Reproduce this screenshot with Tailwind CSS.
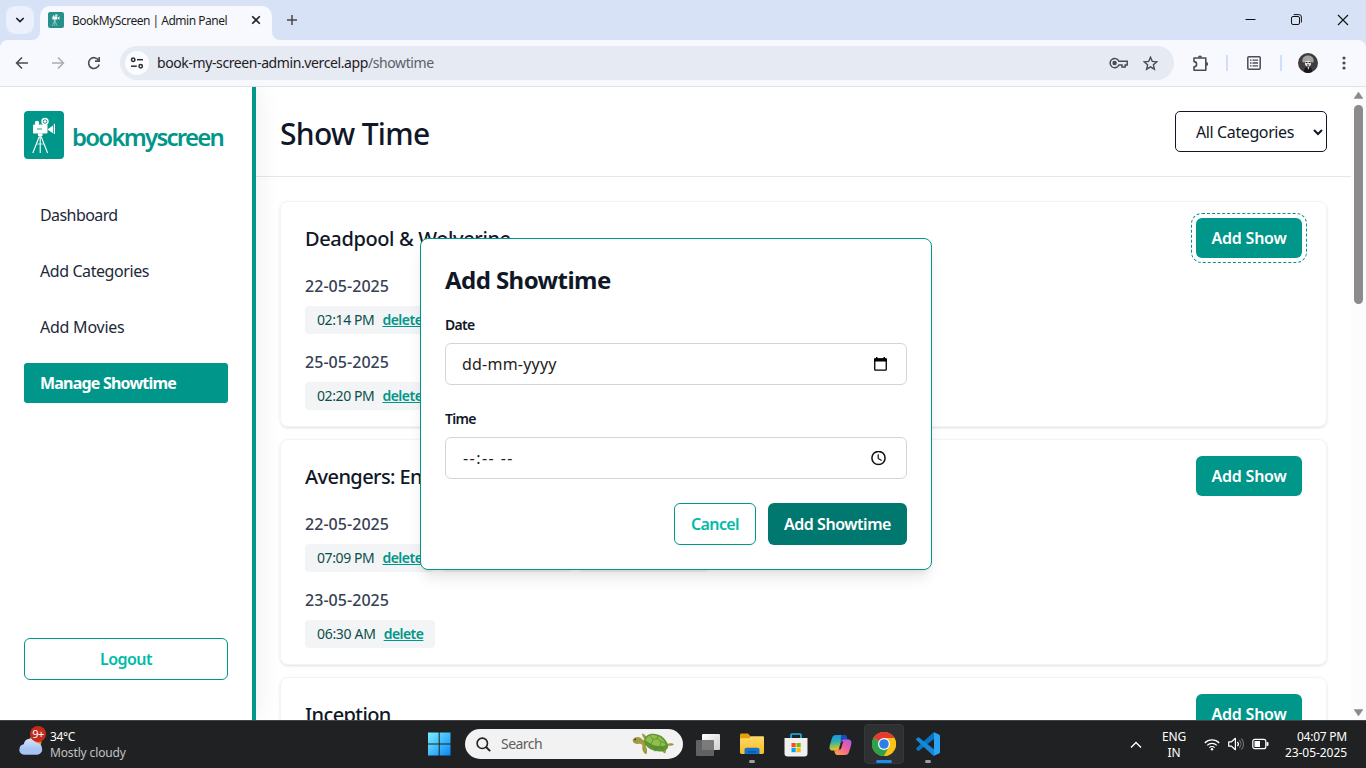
<!DOCTYPE html>
<html lang="en">
<head>
<meta charset="utf-8">
<title>BookMyScreen | Admin Panel</title>
<script src="https://cdn.jsdelivr.net/npm/@tailwindcss/browser@4"></script>
</head>
<body class="w-[1366px] h-[768px] overflow-hidden flex flex-col bg-white text-gray-900 font-['Noto_Sans','Open_Sans',sans-serif]">

<svg class="hidden">
  <symbol id="camera" viewBox="0 0 40 48">
    <g fill="#fff">
      <circle cx="13" cy="12" r="2.2"/>
      <circle cx="21" cy="10.5" r="3.7"/>
      <rect x="9" y="13.6" width="14.5" height="8.8" rx="1"/>
      <path d="M24 18l5-3.400v7.600l-5-3.200z"/>
      <rect x="29.8" y="12.8" width="1.2" height="10.2"/>
      <rect x="14" y="22.4" width="4.5" height="2.6"/>
    </g>
    <circle cx="21" cy="10.5" r="1.8" fill="none" stroke="#009689" stroke-width=".9"/>
    <path d="M13 18h5" stroke="#009689" stroke-width=".9"/>
    <path d="M15.300 25.500L8.800 42M16.200 25v17M17.100 25.500L23.600 42" fill="none" stroke="#fff" stroke-width="1.1"/>
    <path d="M12.600 33h7.200" fill="none" stroke="#fff" stroke-width=".7"/>
  </symbol>
</svg>

<!-- Tab strip -->
<div class="h-10 shrink-0 bg-[#d8e2f6] flex items-end">
  <div class="ml-[6px] mb-[6px] w-7 h-7 rounded-[9px] bg-[#ebf0fc] flex items-center justify-center">
    <svg width="10" height="8" viewBox="0 0 10 8" fill="none" stroke="#1f1f1f" stroke-width="1.7"><path d="M1.3 2L5 5.6 8.7 2"/></svg>
  </div>
  <svg class="-ml-[2px]" width="8" height="8"><path d="M8 0v8H0a8 8 0 0 0 8-8z" fill="#f8f9fe"/></svg>
  <div class="w-[232px] h-[34px] rounded-t-[10px] bg-[#f8f9fe] flex items-center pl-2 pb-[6px]">
    <div class="w-4 h-4 rounded-[2px] bg-[#279088] flex items-center justify-center"><svg width="16" height="16"><use href="#camera"/></svg></div>
    <span class="ml-2 w-[162px] pt-[2px] text-xs leading-4 tracking-[-0.49px] whitespace-nowrap text-[#1f1f1f]">BookMyScreen | Admin Panel</span>
    <svg class="ml-[17px]" width="10" height="10" viewBox="0 0 10 10" stroke="#1f1f1f" stroke-width="1.6"><path d="M1.200 1.200l7.600 7.600M8.800 1.200L1.200 8.800"/></svg>
  </div>
  <svg width="8" height="8"><path d="M0 0v8h8a8 8 0 0 1-8-8z" fill="#f8f9fe"/></svg>
  <svg class="ml-[7px] mb-[15px]" width="10" height="10" viewBox="0 0 10 10" stroke="#474747" stroke-width="1.5"><path d="M5 0v10M0 5h10"/></svg>
  <div class="flex-1"></div>
  <div class="flex items-center h-10 pr-[17px] gap-[35px]">
    <svg width="11" height="12" viewBox="0 0 11 12" stroke="#111" stroke-width="1"><path d="M.5 5.5h10"/></svg>
    <svg width="11" height="12" viewBox="0 0 11 12" fill="none" stroke="#111"><rect x=".5" y="2.500" width="8" height="8" rx="1.500"/><path d="M2.700.6h5.200a2.500 2.500 0 0 1 2.500 2.500v5.400"/></svg>
    <svg width="12" height="12" viewBox="0 0 12 12" stroke="#111" stroke-width="1.1"><path d="M1 1l10 10M11 1L1 11"/></svg>
  </div>
</div>

<!-- Toolbar -->
<div class="h-[47px] shrink-0 bg-[#d8e2f6]">
  <div class="h-full rounded-t-lg bg-[#f8f9fe] border-b border-[#dde2ea] flex items-center">
    <svg class="ml-[15px]" width="14" height="14" viewBox="0 0 14 14" fill="none" stroke="#474c57" stroke-width="1.6"><path d="M13 7H2M7 1.500L1.600 7 7 12.500"/></svg>
    <svg class="ml-[22px]" width="14" height="14" viewBox="0 0 14 14" fill="none" stroke="#a9acb3" stroke-width="1.6"><path d="M1 7h11M7 1.500L12.400 7 7 12.500"/></svg>
    <svg class="ml-[22px]" width="14" height="14" viewBox="0 0 14 14" fill="none" stroke="#474c57" stroke-width="1.6"><path d="M12.200 8.600A5.400 5.400 0 1 1 11.600 4.200"/><path d="M12.200.9v4.200H8"/></svg>
    <div class="ml-[19px] w-[1054px] h-[34px] rounded-full bg-[#e6eaf3] flex items-center pl-[5px] pr-4">
      <div class="w-6 h-6 rounded-full bg-[#fbfcff] flex items-center justify-center">
        <svg width="14" height="14" viewBox="0 0 14 14" fill="none" stroke="#2a2d34" stroke-width="1.500"><circle cx="3.200" cy="3.700" r="1.700"/><path d="M7 3.700h6"/><circle cx="10.700" cy="10.200" r="1.700"/><path d="M1 10.200h5.800"/></svg>
      </div>
      <span class="ml-2 text-sm tracking-[-0.4px] text-[#1f2024]">book-my-screen-admin.vercel.app<span class="text-[#5b606b]">/showtime</span></span>
      <div class="flex-1"></div>
      <svg width="19" height="12" viewBox="0 0 19 12" fill="none" stroke="#474c57" stroke-width="1.500"><path d="M9.900 4.200A4.600 4.600 0 1 0 9.900 8H13v2h3.200V8h2V4.200z"/><circle cx="5.600" cy="6.100" r="1.500" fill="#474c57"/></svg>
      <svg class="ml-[15px]" width="15" height="15" viewBox="0 0 15 15" fill="none" stroke="#474c57" stroke-width="1.400"><path d="M7.500 1.300l1.800 4.100 4.500.4-3.400 3 1 4.400-3.900-2.300-3.900 2.300 1-4.400-3.400-3 4.500-.4z"/></svg>
    </div>
    <svg class="ml-[18px]" width="18" height="18" viewBox="0 0 18 18"><path d="M2 4h11.800v12.200H2v-3.400a2.600 2.600 0 0 0 0-5.200z" fill="none" stroke="#474c57" stroke-width="1.600" stroke-linejoin="round"/><path d="M6 3.600a2 2 0 0 1 4 0zM14.200 8a2 2 0 0 1 0 4z" fill="#474c57"/></svg>
    <div class="ml-4 w-[2px] h-4 bg-[#cfdffb]"></div>
    <svg class="ml-[19px]" width="14" height="14" viewBox="0 0 14 14" fill="none" stroke="#474c57"><rect x=".8" y=".8" width="12.400" height="12.400" rx="1" stroke-width="1.500"/><path d="M3 4.200h1.500M3 7h1.500M3 9.800h1.500M5.500 4.200H11M5.500 7H11M5.500 9.800H11" stroke-width="1.300"/></svg>
    <div class="ml-[19px] w-[2px] h-4 bg-[#cfdffb]"></div>
    <svg class="ml-4" width="20" height="20" viewBox="0 0 20 20"><circle cx="10" cy="10" r="10" fill="#3f3d3d"/><path d="M4.500 9c-1-4 2-6.600 5.500-6.600S16.500 5 15.500 9c-1 1-2 .5-2.500-1l-5-.5C7 9.500 5.500 10 4.500 9z" fill="#a5a2a0"/><path d="M6.800 8.500c1-1.500 5-1.500 6.400 0l-.2 3c-.6 1.500-1.600 2.300-3 2.300s-2.400-.8-3-2.300z" fill="#e2e0de"/><path d="M7.600 9.500h2M10.700 9.500h1.900M9 12h2.200" stroke="#222" stroke-width="1.200"/><path d="M6 19c0-4 2-5.500 4-5.500s4 1.500 4 5.500a9 9 0 0 1-8 0z" fill="#171717"/><path d="M9.500 14l.8 3 1-3z" fill="#ddd"/></svg>
    <svg class="ml-6" width="4" height="14" fill="#474c57"><circle cx="2" cy="2" r="1.600"/><circle cx="2" cy="7" r="1.600"/><circle cx="2" cy="12" r="1.600"/></svg>
  </div>
</div>

<!-- Page -->
<div class="relative h-[633px] shrink-0 overflow-hidden flex bg-white">
  <aside class="z-10 w-64 shrink-0 h-full border-r-4 border-[#009689] px-6 pt-6 pb-10 flex flex-col bg-white shadow-[2px_0_25px_rgba(0,0,0,0.07)]">
    <div class="flex items-center gap-2">
      <div class="w-10 h-12 rounded bg-[#009689]"><svg width="40" height="48"><use href="#camera"/></svg></div>
      <span class="text-2xl font-semibold tracking-[-1.75px] text-[#009689] pt-[3px]">bookmyscreen</span>
    </div>
    <nav class="mt-9 flex flex-col gap-4 text-base text-gray-800">
      <a class="h-10 px-4 flex items-center tracking-[-0.58px]">Dashboard</a>
      <a class="h-10 px-4 flex items-center tracking-[-0.42px]">Add Categories</a>
      <a class="h-10 px-4 flex items-center tracking-[-0.24px]">Add Movies</a>
      <a class="h-10 px-4 flex items-center tracking-[-0.8px] rounded-[3px] bg-[#009689] text-white font-bold">Manage Showtime</a>
    </nav>
    <button class="mt-auto h-[42px] shrink-0 rounded-md border border-[#009689] text-[#00bba7] font-semibold tracking-[-0.53px]">Logout</button>
  </aside>

  <main class="w-[1095px] h-full overflow-hidden shrink-0">
    <header class="h-[90px] px-6 pt-6 border-b border-gray-200 flex items-start justify-between">
      <h1 class="text-3xl leading-[45px] font-medium tracking-[-0.68px]">Show Time</h1>
      <div class="w-[152px] h-[41px] rounded-[5px] border border-gray-900 flex items-center justify-between pl-5 pr-[3px] pt-px">
        <span class="tracking-[-0.39px]">All Categories</span>
        <svg width="10" height="7" viewBox="0 0 10 7" fill="none" stroke="#101828" stroke-width="2"><path d="M1 1L5 5 9 1"/></svg>
      </div>
    </header>

    <div class="p-6 flex flex-col gap-3">
      <section class="h-[226px] shrink-0 rounded-lg border border-gray-100 shadow-sm px-6 py-4 flex flex-col gap-4">
        <div class="flex justify-between items-center h-10">
          <h2 class="pt-[2px] text-xl font-medium tracking-[-0.38px]">Deadpool &amp; Wolverine</h2>
          <button class="w-[106px] h-10 rounded-md bg-[#009689] text-white font-semibold tracking-[-0.22px] outline-1 outline-dashed outline-[#009689] outline-offset-4">Add Show</button>
        </div>
        <div class="flex flex-col gap-2">
          <h3 class="text-base font-medium text-gray-700 tracking-[0.05px]">22-05-2025</h3>
          <div class="flex gap-2 text-sm">
            <div class="h-7 w-[129px] px-3 flex items-center gap-2 rounded bg-gray-100 whitespace-nowrap"><span class="text-[#0b4f4a] tracking-[-0.4px]">02:14 PM</span><a class="underline font-semibold text-[#009689] tracking-[-0.5px]">delete</a></div>
          </div>
        </div>
        <div class="flex flex-col gap-2">
          <h3 class="text-base font-medium text-gray-700 tracking-[0.05px]">25-05-2025</h3>
          <div class="flex gap-2 text-sm">
            <div class="h-7 w-[129px] px-3 flex items-center gap-2 rounded bg-gray-100 whitespace-nowrap"><span class="text-[#0b4f4a] tracking-[-0.4px]">02:20 PM</span><a class="underline font-semibold text-[#009689] tracking-[-0.5px]">delete</a></div>
          </div>
        </div>
      </section>

      <section class="h-[226px] shrink-0 rounded-lg border border-gray-100 shadow-sm px-6 py-4 flex flex-col gap-4">
        <div class="flex justify-between items-center h-10">
          <h2 class="pt-[2px] text-xl font-medium tracking-[-0.58px]">Avengers: Endgame</h2>
          <button class="w-[106px] h-10 rounded-md bg-[#009689] text-white font-semibold tracking-[-0.22px]">Add Show</button>
        </div>
        <div class="flex flex-col gap-2">
          <h3 class="text-base font-medium text-gray-700 tracking-[0.05px]">22-05-2025</h3>
          <div class="flex gap-2 text-sm">
            <div class="h-7 w-[129px] px-3 flex items-center gap-2 rounded bg-gray-100 whitespace-nowrap"><span class="text-[#0b4f4a] tracking-[-0.4px]">07:09 PM</span><a class="underline font-semibold text-[#009689] tracking-[-0.5px]">delete</a></div>
            <div class="h-7 w-[129px] rounded bg-gray-100"></div>
            <div class="h-7 w-[129px] rounded bg-gray-100"></div>
          </div>
        </div>
        <div class="flex flex-col gap-2">
          <h3 class="text-base font-medium text-gray-700 tracking-[0.05px]">23-05-2025</h3>
          <div class="flex gap-2 text-sm">
            <div class="h-7 w-[130px] px-3 flex items-center gap-2 rounded bg-gray-100 whitespace-nowrap"><span class="text-[#0b4f4a] tracking-[-0.3px]">06:30 AM</span><a class="underline font-semibold text-[#009689] tracking-[-0.55px]">delete</a></div>
          </div>
        </div>
      </section>

      <section class="h-[226px] shrink-0 rounded-lg border border-gray-100 shadow-sm px-6 py-4">
        <div class="flex justify-between items-center h-10">
          <h2 class="pt-[2px] text-xl font-medium tracking-[-0.6px]">Inception</h2>
          <button class="w-[106px] h-10 rounded-md bg-[#009689] text-white font-semibold tracking-[-0.22px]">Add Show</button>
        </div>
      </section>
    </div>
  </main>

  <!-- Scrollbar -->
  <div class="w-[15px] shrink-0 bg-[#fcfcfc] flex flex-col items-center">
    <svg class="mt-[5px]" width="9" height="7"><path d="M4.500 0L9 6.500H0z" fill="#8b8b8b" stroke="#8b8b8b" stroke-width=".5" stroke-linejoin="round"/></svg>
    <div class="mt-[6px] w-[9px] h-[199px] rounded-full bg-[#8b8b8b]"></div>
    <svg class="mt-auto mb-[4px]" width="9" height="7"><path d="M4.500 7L0 .5h9z" fill="#8b8b8b" stroke="#8b8b8b" stroke-width=".5" stroke-linejoin="round"/></svg>
  </div>

  <!-- Dialog -->
  <div class="absolute z-20 left-[420px] top-[151px] w-[512px] h-[332px] rounded-lg border border-[#009689] bg-white shadow-lg p-6 flex flex-col">
    <h2 class="text-2xl leading-[34px] h-8 font-bold tracking-[-0.56px]">Add Showtime</h2>
    <label class="mt-5 text-sm font-semibold tracking-[-0.7px]">Date</label>
    <div class="mt-2 h-[42px] rounded-md border border-gray-300 pl-4 pr-[19px] flex items-center justify-between">
      <span class="text-[#222] tracking-[0.22px]">dd-mm-yyyy</span>
      <svg width="13" height="14" viewBox="0 0 13 14"><rect x=".75" y="2" width="11.500" height="11.200" rx=".6" fill="none" stroke="#000" stroke-width="1.300"/><path d="M0 1.500h13v3H0zM2 0h1.500v2H2zM9.500 0H11v2H9.500z"/></svg>
    </div>
    <label class="mt-6 text-sm font-semibold tracking-[-0.7px]">Time</label>
    <div class="mt-2 h-[42px] rounded-md border border-gray-300 pl-[17px] pr-5 flex items-center justify-between">
      <span class="text-[#222] tracking-[1.450px] whitespace-pre">--:-- --</span>
      <svg width="15" height="15" viewBox="0 0 15 15" fill="none" stroke="#111"><circle cx="7.500" cy="7" r="6.600" stroke-width="1.500"/><path d="M7.200 3.200v4.200l3.400 2" stroke-width="1.200"/></svg>
    </div>
    <div class="mt-6 flex justify-end gap-3">
      <button class="w-[82px] h-[42px] rounded-md border border-[#009689] text-[#00bba7] font-semibold tracking-[-0.62px]">Cancel</button>
      <button class="w-[139px] h-[42px] rounded-md bg-[#00786f] text-white font-semibold tracking-[-0.46px]">Add Showtime</button>
    </div>
  </div>
</div>

<!-- Taskbar -->
<div class="h-12 shrink-0 bg-[#202122] border-t border-[#414243] flex items-center text-xs text-white">
  <div class="w-[427px] pl-[18px] flex items-center">
    <div class="relative w-[28px] h-8">
      <svg class="absolute left-0 top-[1px]" width="28" height="28" viewBox="0 0 28 28"><defs><linearGradient id="cl" x2="0" y2="1"><stop stop-color="#d3e4fb"/><stop offset="1" stop-color="#8fb4ee"/></linearGradient></defs><circle cx="17" cy="12" r="6.500" fill="#f5821f"/><path d="M6.500 24.500a5.200 5.200 0 0 1-.8-10.300 6.800 6.800 0 0 1 12.800-1.500 6 6 0 0 1 1 11.800z" fill="url(#cl)"/><path d="M1.300 19.500c4-2 8 1 12-1 3-1.500 7-1 11 .8a5.800 5.800 0 0 1-5 5.200h-12.500a5.200 5.200 0 0 1-5.500-5z" fill="#a7c4f3"/></svg>
      <span class="absolute left-[12px] -top-[3px] w-4 h-4 rounded-full bg-[#c42b1c] text-[11px] leading-4 text-center tracking-[-0.6px]">9+</span>
    </div>
    <div class="ml-1 leading-4"><div class="tracking-[-0.36px]">34°C</div><div class="text-[#c3c3c3] tracking-[-0.14px]">Mostly cloudy</div></div>
  </div>
  <svg class="-mt-px" width="24" height="24" viewBox="0 0 24 24"><defs><linearGradient id="w" x2="1" y2="1"><stop stop-color="#7bf0fd"/><stop offset="1" stop-color="#0b86f7"/></linearGradient></defs><path d="M1 .5h10.700v11H1zM12.700.5h10.800v11H12.700zM1 12.500h10.700v11H1zM12.700 12.500h10.800v11H12.700z" fill="url(#w)"/></svg>
  <div class="-mt-px ml-[14px] w-[218px] h-[30px] rounded-full bg-[#f2f2f2] flex items-center pl-[11px] pr-2">
    <svg width="15" height="15" viewBox="0 0 15 15" fill="none" stroke="#222" stroke-width="1.600"><circle cx="6.300" cy="6.300" r="5.200"/><path d="M10 10l4.200 4.200" stroke-width="1.900"/></svg>
    <span class="ml-[10px] text-sm text-[#5d5d5d] tracking-[-0.55px]">Search</span>
    <div class="flex-1"></div>
    <svg width="43" height="24" viewBox="0 0 43 24"><g fill="#a29a3f"><path d="M11 12c2 2 4 3 4 6 0 2 .5 4-1.500 4-2.500-1-4-6-3-9zM14 4c-3-3-4-3-4-2 0 2 2 5 4 6zM30 15c4 0 5 5 3 6.500-2-1-5-4-5-6zM34 12c4-1 7-1 8 .5-1 1.500-5 1.500-8 1z"/><ellipse cx="5.500" cy="8.500" rx="4.800" ry="3.600"/><path d="M7 6l7 3v6l-7-4z"/></g><path d="M12 9c1-6 6-8 11-7 7 1 11 5 13 11 1 4-3 6.500-8 6.500-7 0-15-4-16-10.500z" fill="#5d9630"/><path d="M13.500 8.500c1-4 5-6 9-5.300 6 1 9.500 4.500 11.500 9.300-3 3-15 2-20.500-4z" fill="#90bd4b"/><path d="M18 3.500l3 4-2 5 4 4 5-2 1-5-4-3 1-3M21 7.500l4-1M19 12.500l-5-3M29 9.500l5 2M28 14.500l4 3M23 16.500v3" fill="none" stroke="#4b7d26" stroke-width=".6"/><circle cx="3.200" cy="7.500" r=".8" fill="#222"/></svg>
  </div>
  <div class="ml-[3px] flex h-full">
    <div class="w-11 h-full flex items-center justify-center">
      <svg width="24" height="24" viewBox="0 0 24 24"><defs><linearGradient id="tv" x2="1" y2="1"><stop stop-color="#fff"/><stop offset="1" stop-color="#cfcfcf"/></linearGradient></defs><rect x="6" y="1" width="18" height="16" rx="1" fill="url(#tv)"/><rect x="0" y="7" width="18" height="16" rx="1" fill="#6b6b6b" fill-opacity=".88"/></svg>
    </div>
    <div class="w-11 h-full flex flex-col items-center pt-[12px]">
      <svg width="24" height="22" viewBox="0 0 24 23" preserveAspectRatio="none"><defs><linearGradient id="fo" x2="0" y2="1"><stop stop-color="#ffd968"/><stop offset="1" stop-color="#f8bc24"/></linearGradient></defs><path d="M0 2q0-1.500 1.500-1.500h6.500l2.500 3v4H0z" fill="#e2a10a"/><path d="M0 5.500h9l2-2h12q1 0 1 1v16q0 1.500-1.500 1.500h-21Q0 22 0 20.500z" fill="url(#fo)"/><path d="M4.500 22v-4.500q0-2 2-2h11q2 0 2 2V22z" fill="#1273cf"/><path d="M8 19h8v1.500H8z" fill="#0a559f"/></svg>
      <span class="mt-[5px] w-[6px] h-[3px] rounded-full bg-[#a0a0a0]"></span>
    </div>
    <div class="w-11 h-full flex items-center justify-center">
      <svg width="24" height="24" viewBox="0 0 24 24"><path d="M7 6V2.200Q7 1 8.200 1h7.600Q17 1 17 2.200V6" fill="none" stroke="#1fb4e8" stroke-width="1.700"/><path d="M.5 5h23v15.500q0 3-3 3h-17q-3 0-3-3z" fill="#f0f0f0"/><path d="M7.500 10h4.200v4.200H7.500z" fill="#f25022"/><path d="M12.500 10h4.200v4.200h-4.200z" fill="#7fba00"/><path d="M7.500 15h4.200v4.200H7.500z" fill="#00a4ef"/><path d="M12.500 15h4.200v4.200h-4.200z" fill="#ffb900"/></svg>
    </div>
    <div class="w-11 h-full flex items-center justify-center">
      <svg width="23" height="22" viewBox="0 0 23 22"><defs><linearGradient id="c1" x2=".2" y2="1"><stop stop-color="#1a8df0"/><stop offset=".45" stop-color="#28b0b0"/><stop offset="1" stop-color="#f0c419"/></linearGradient><linearGradient id="c2" x1="1" x2=".2" y2="1"><stop stop-color="#a65cf0"/><stop offset=".5" stop-color="#f0609a"/><stop offset="1" stop-color="#ff9d4a"/></linearGradient></defs><path d="M7 1h8c2 0 2.500 1.500 3 3.500l.5 1.500h-4c-2 0-2.500 1-3 3l-1.500 5.500C9.500 16 9 16.500 7 16.500H3.500C.5 16.500 0 14 1 10.500L3 4C3.700 2 4.500 1 7 1z" fill="url(#c1)"/><path d="M12 1h3c2 0 2.500 1.500 3 3.500l.5 1.500h-4c-1.500 0-2.300.5-2.800 2z" fill="#1c49c9"/><path d="M16 21H8.500c-2 0-2.500-1.500-3-3.500L5 16.300h2.500c2 0 2.500-.8 3-2.500L12.300 8c.5-1.800 1.200-2.500 3-2.500h4c3 0 3.700 2.500 2.700 6L20 18c-.7 2-1.500 3-4 3z" fill="url(#c2)"/><path d="M10 15.500l2-6.500q.6-2 2.300-2l-2 7q-.6 2-2.300 1.500z" fill="#202122"/></svg>
    </div>
    <div class="w-11 h-full flex justify-center pt-[3px]">
      <div class="w-10 h-10 rounded-[4px] bg-[#2f3031] border border-[#363738] flex flex-col items-center pt-[7px]">
        <svg class="shrink-0" width="24" height="24" viewBox="0 0 24 24"><circle cx="12" cy="12" r="12" fill="#fbc116"/><path d="M12 12L1.600 6A12 12 0 0 1 22.400 6z" fill="#e33b2e"/><path d="M1.600 6A12 12 0 0 0 12 24l5.200-9z" fill="#2ba24c"/><path d="M12 6h10.400A12 12 0 0 1 12 24l5.200-9z" fill="#fbc116"/><circle cx="12" cy="12" r="6" fill="#fff"/><circle cx="12" cy="12" r="4.800" fill="#2f7de9"/></svg>
        <span class="mt-[4px] w-4 h-[3px] shrink-0 rounded-full bg-[#1a8cf0]"></span>
      </div>
    </div>
    <div class="w-11 h-full flex flex-col items-center pt-[11px]">
      <svg width="24" height="24" viewBox="0 0 24 24"><path d="M18 .3l5 2.300q1 .5 1 1.500v16q0 1-1 1.500L18 23.800z" fill="#2aa3f2"/><path d="M18 .3v6.600L3 18.700q-.6.400-1.200 0L.3 17.300q-.5-.6 0-1.200L17 .7q.5-.5 1-.4z" fill="#0a74c4"/><path d="M18 23.800v-6.600L3 5.400q-.6-.4-1.200 0L.3 6.800q-.5.600 0 1.200L17 23.400q.5.500 1 .4z" fill="#1688d8"/></svg>
      <span class="mt-[4px] w-[6px] h-[3px] rounded-full bg-[#a0a0a0]"></span>
    </div>
  </div>
  <div class="flex-1"></div>
  <div class="flex items-center pr-[19px]">
    <svg width="12" height="8" viewBox="0 0 12 8" fill="none" stroke="#fff" stroke-width="1.400"><path d="M1 6.500l5-5 5 5"/></svg>
    <div class="ml-5 w-6 text-center leading-4 tracking-[-0.18px]">ENG<br>IN</div>
    <svg class="-mt-px ml-[18px]" width="16" height="13" viewBox="0 0 16 13" fill="none" stroke="#fff" stroke-width="1.300"><path d="M.8 5a10 10 0 0 1 14.400 0M3.200 7.400a6.800 6.800 0 0 1 9.600 0M5.400 9.600a3.700 3.700 0 0 1 5.200 0"/><circle cx="8" cy="11.300" r="1.200" fill="#fff" stroke="none"/></svg>
    <svg class="-mt-px ml-2" width="16" height="14" viewBox="0 0 16 14" fill="none" stroke="#fff" stroke-width="1.200"><path d="M.7 4.800h2.800L7.400 1.300v11.400L3.500 9.200H.7z" stroke-linejoin="round"/><path d="M9.400 4.800a3.200 3.200 0 0 1 0 4.400"/><path d="M11.300 3a6 6 0 0 1 0 8M13.300 1.300a8.400 8.400 0 0 1 0 11.400" stroke="#6a6a6a"/></svg>
    <svg class="-mt-px ml-2" width="17" height="12" viewBox="0 0 17 12"><rect x=".8" y="1.300" width="13" height="9.400" rx="2" fill="none" stroke="#fff" stroke-width="1.200"/><rect x="2.500" y="3" width="5.500" height="6" fill="#fff"/><path d="M14.500 4h1q1 0 1 1v2q0 1-1 1h-1z" fill="#fff"/></svg>
    <div class="ml-[14px] w-[64px] text-right leading-4"><div class="tracking-[-0.24px]">04:07 PM</div><div class="tracking-[-0.06px]">23-05-2025</div></div>
  </div>
</div>
</body>
</html>
